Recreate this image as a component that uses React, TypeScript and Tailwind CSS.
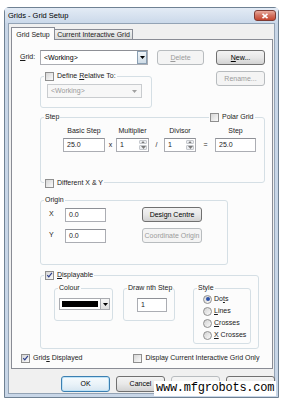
import React from "react";

function U({ children }: { children: React.ReactNode }) {
  return <span className="underline decoration-[0.5px] underline-offset-[1px]">{children}</span>;
}

function Down({ color = "#000" }: { color?: string }) {
  return (
    <svg viewBox="0 0 5 3" className="h-[3px] w-[5px]">
      <polygon points="0,0 5,0 2.5,3" fill={color} />
    </svg>
  );
}

function Up({ color = "#7a7a7a" }: { color?: string }) {
  return (
    <svg viewBox="0 0 5 3" className="h-[2px] w-[4px]">
      <polygon points="0,3 5,3 2.5,0" fill={color} />
    </svg>
  );
}

function Check({ checked = false }: { checked?: boolean }) {
  return (
    <span className="flex h-[9px] w-[9px] shrink-0 items-center justify-center border border-[#8f8f8f] bg-linear-to-br from-[#d6d6d6] to-[#fbfbfb]">
      {checked && (
        <svg viewBox="0 0 9 9" className="h-[8px] w-[8px]">
          <path d="M1.6 4.6 L3.6 6.9 L7.6 1.8" fill="none" stroke="#2c3f8c" strokeWidth="1.5" />
        </svg>
      )}
    </span>
  );
}

function Radio({ on = false }: { on?: boolean }) {
  return (
    <span className="flex h-[9px] w-[9px] shrink-0 items-center justify-center rounded-full border border-[#8f8f8f] bg-linear-to-br from-[#d2d2d2] to-[#fbfbfb]">
      {on && <span className="h-[4px] w-[4px] rounded-full bg-[#2d52a8]" />}
    </span>
  );
}

function Btn({
  children,
  disabled = false,
  primary = false,
  className = "",
}: {
  children: React.ReactNode;
  disabled?: boolean;
  primary?: boolean;
  className?: string;
}) {
  const tone = disabled
    ? "border-[#b8bcbf] bg-[#f4f4f4] text-[#9b9b9b]"
    : primary
      ? "border-[#3c7fb1] bg-linear-to-b from-[#f6fafd] via-[#eaf3f9] to-[#d7e6f1] text-black shadow-[inset_0_0_0_1px_#bfe3f7]"
      : "border-[#707070] bg-linear-to-b from-[#f3f3f3] via-[#e8e8e8] to-[#d2d2d2] text-black";
  return (
    <div className={`flex shrink-0 items-center justify-center rounded-[3px] border ${tone} ${className}`}>
      <span className="leading-[10px]">{children}</span>
    </div>
  );
}

function Field({ value, className = "" }: { value: string; className?: string }) {
  return (
    <div className={`flex h-[14px] shrink-0 items-center border border-[#abadb3] border-t-[#8e9096] bg-white pl-[3px] ${className}`}>
      <span className="leading-[10px]">{value}</span>
    </div>
  );
}

function Spin({ value, className = "" }: { value: string; className?: string }) {
  return (
    <div className={`flex h-[14px] shrink-0 border border-[#abadb3] border-t-[#8e9096] bg-white ${className}`}>
      <span className="flex-1 pl-[3px] leading-[12px]">{value}</span>
      <span className="flex w-[10px] flex-col gap-px p-px">
        <span className="flex flex-1 items-center justify-center rounded-[1px] border border-[#c6c9ce] bg-[#eceef1]">
          <Up />
        </span>
        <span className="flex flex-1 items-center justify-center rounded-[1px] border border-[#c6c9ce] bg-[#eceef1]">
          <Down color="#7a7a7a" />
        </span>
      </span>
    </div>
  );
}

function Group({
  label,
  className = "",
  children,
}: {
  label: React.ReactNode;
  className?: string;
  children?: React.ReactNode;
}) {
  return (
    <div className={`relative shrink-0 rounded-[3px] border border-[#d5dfe5] ${className}`}>
      <span className="absolute -top-[6px] left-[3px] flex items-center gap-[3px] bg-[#fcfcfc] px-[1px] leading-[10px]">
        {label}
      </span>
      {children}
    </div>
  );
}

export default function App() {
  return (
    <div className="relative h-[400px] w-[285px] overflow-hidden bg-white font-['Liberation_Sans',Arial,sans-serif] text-[7px] text-[#1b1b1b]">
      <div className="ml-[4px] mt-[7px] flex h-[391px] w-[275px] flex-col rounded-t-[5px] border border-[#6f8193] bg-[#c8d6e7]">
        {/* title bar */}
        <div className="flex h-[15px] shrink-0 items-center justify-between bg-linear-to-b from-[#e3ebf5] to-[#cbd9ea] pl-[3px] pr-[2px]">
          <span className="text-[7.5px] leading-[10px] text-black">Grids - Grid Setup</span>
          <div className="flex h-[11px] w-[22px] items-center justify-center rounded-[3px] border border-[#7d3b34] bg-linear-to-b from-[#e8a99c] via-[#d2705f] to-[#c4452f]">
            <svg viewBox="0 0 8 6" className="h-[6px] w-[8px]">
              <path d="M1.5 0.8 L6.5 5.2 M6.5 0.8 L1.5 5.2" stroke="#fff" strokeWidth="1.6" />
            </svg>
          </div>
        </div>

        {/* body */}
        <div className="mx-[3px] mb-[3px] flex flex-1 flex-col border border-[#93a3b5] bg-[#f0f0f0] pl-[2px] pr-[1px] pt-[3px]">
          {/* tabs */}
          <div className="flex h-[12px] shrink-0 items-end">
            <div className="relative z-10 -mb-px flex h-[13px] w-[44px] items-start justify-center border border-b-0 border-[#898c95] bg-[#fcfcfc] pt-[2px]">
              <span className="leading-[9px]">Grid Setup</span>
            </div>
            <div className="flex h-[10px] w-[78px] items-center justify-center border border-b-0 border-l-0 border-[#898c95] bg-linear-to-b from-[#f2f2f2] to-[#dcdcdc]">
              <span className="leading-[9px]">Current Interactive Grid</span>
            </div>
          </div>

          {/* panel */}
          <div className="flex h-[330px] shrink-0 flex-col border border-[#898c95] bg-[#fcfcfc]">
            {/* grid row */}
            <div className="mt-[10px] flex h-[15px] items-center">
              <span className="ml-[8px] w-[20px]">
                <U>G</U>rid:
              </span>
              <div className="flex h-[15px] w-[108px] items-center border border-[#abadb3] border-t-[#8e9096] bg-white pl-[3px]">
                <span className="flex-1 leading-[10px] text-black">&lt;Working&gt;</span>
                <span className="flex h-full w-[10px] items-center justify-center border border-[#8a9fb3] bg-linear-to-b from-[#f1f5f8] to-[#cfdce7]">
                  <Down />
                </span>
              </div>
              <Btn disabled className="ml-[9px] h-[15px] w-[47px]">
                <U>D</U>elete
              </Btn>
              <Btn className="ml-[12px] h-[15px] w-[49px]">
                <U>N</U>ew...
              </Btn>
            </div>

            {/* define relative row */}
            <div className="mt-[6px] flex items-start">
              <Group
                className="ml-[28px] mt-[5px] h-[32px] w-[112px]"
                label={
                  <>
                    <Check />
                    <span>
                      Define <U>R</U>elative To:
                    </span>
                  </>
                }
              >
                <div className="ml-[6px] mt-[7px] flex h-[14px] w-[95px] items-center border border-[#c9cccf] bg-[#f7f7f7] pl-[3px] pr-[4px]">
                  <span className="flex-1 leading-[10px] text-[#9a9a9a]">&lt;Working&gt;</span>
                  <Down color="#a0a0a0" />
                </div>
              </Group>
              <Btn disabled className="ml-[64px] h-[15px] w-[49px]">
                Rename...
              </Btn>
            </div>

            {/* step */}
            <Group className="ml-[28px] mt-[9px] h-[66px] w-[225px]" label={<span>Step</span>}>
              <span className="absolute -top-[6px] left-[168px] flex items-center gap-[3px] bg-[#fcfcfc] px-[1px] leading-[10px]">
                <Check />
                <span>Polar Grid</span>
              </span>
              <div className="ml-[22px] mt-[8px] grid grid-cols-[42px_11px_33px_15px_32px_19px_41px] items-center">
                <span className="text-center leading-[9px]">Basic Step</span>
                <span />
                <span className="text-center leading-[9px]">Multiplier</span>
                <span />
                <span className="text-center leading-[9px]">Divisor</span>
                <span />
                <span className="text-center leading-[9px]">Step</span>
              </div>
              <div className="ml-[22px] mt-[3px] grid grid-cols-[42px_11px_33px_15px_32px_19px_41px] items-center">
                <Field value="25.0" />
                <span className="text-center">x</span>
                <Spin value="1" />
                <span className="text-center">/</span>
                <Spin value="1" />
                <span className="text-center">=</span>
                <Field value="25.0" />
              </div>
              <span className="absolute -bottom-[6px] left-[3px] flex items-center gap-[3px] bg-[#fcfcfc] px-[1px] leading-[10px]">
                <Check />
                <span>Different X &amp; Y</span>
              </span>
            </Group>

            {/* origin */}
            <Group className="ml-[28px] mt-[17px] h-[65px] w-[188px]" label={<span>Origin</span>}>
              <div className="mt-[6px] flex items-center">
                <span className="ml-[8px] w-[16px]">X</span>
                <Field value="0.0" className="w-[41px]" />
                <Btn className="ml-[36px] h-[15px] w-[60px]">Design Centre</Btn>
              </div>
              <div className="mt-[6px] flex items-center">
                <span className="ml-[8px] w-[16px]">Y</span>
                <Field value="0.0" className="w-[41px]" />
                <Btn disabled className="ml-[36px] h-[15px] w-[60px]">
                  Coordinate Origin
                </Btn>
              </div>
            </Group>

            {/* displayable */}
            <Group
              className="ml-[28px] mt-[10px] h-[74px] w-[219px]"
              label={
                <>
                  <Check checked />
                  <span>
                    <U>D</U>isplayable
                  </span>
                </>
              }
            >
              <div className="ml-[13px] mt-[12px] flex items-start">
                <Group className="h-[33px] w-[59px]" label={<span>Colour</span>}>
                  <div className="ml-[4px] mt-[9px] flex h-[12px] w-[51px] border border-[#a9abb0] bg-white">
                    <span className="m-[2px] flex-1 bg-black" />
                    <span className="flex w-[9px] items-center justify-center border-l border-[#a9abb0] bg-linear-to-b from-[#f6f6f6] to-[#dedede]">
                      <Down />
                    </span>
                  </div>
                </Group>
                <Group className="ml-[10px] h-[33px] w-[52px]" label={<span>Draw nth Step</span>}>
                  <Field value="1" className="ml-[13px] mt-[9px] w-[30px]" />
                </Group>
                <Group className="ml-[18px] h-[56px] w-[58px]" label={<span>Style</span>}>
                  <div className="ml-[9px] mt-[4px] flex flex-col">
                    <div className="flex h-[12px] items-center gap-[2px]">
                      <Radio on />
                      <span>
                        Do<U>t</U>s
                      </span>
                    </div>
                    <div className="flex h-[12px] items-center gap-[2px]">
                      <Radio />
                      <span>
                        <U>L</U>ines
                      </span>
                    </div>
                    <div className="flex h-[12px] items-center gap-[2px]">
                      <Radio />
                      <span>
                        <U>C</U>rosses
                      </span>
                    </div>
                    <div className="flex h-[12px] items-center gap-[2px]">
                      <Radio />
                      <span>
                        <U>X</U> Crosses
                      </span>
                    </div>
                  </div>
                </Group>
              </div>
            </Group>

            {/* bottom checks */}
            <div className="mt-[4px] flex h-[10px] items-center">
              <span className="ml-[9px] flex items-center gap-[3px]">
                <Check checked />
                <span>
                  Grid<U>s</U> Displayed
                </span>
              </span>
              <span className="ml-[51px] flex items-center gap-[3px]">
                <Check />
                <span>Display Current Interactive Grid Only</span>
              </span>
            </div>
          </div>

          {/* buttons */}
          <div className="mt-[7px] flex h-[16px] gap-[6px] pl-[50px]">
            <Btn primary className="h-[16px] w-[49px]">
              OK
            </Btn>
            <Btn className="h-[16px] w-[49px]">Cancel</Btn>
            <Btn disabled className="h-[16px] w-[49px]">
              Apply
            </Btn>
            <Btn className="h-[16px] w-[49px]">Help</Btn>
          </div>
        </div>
      </div>

      {/* watermark */}
      <span className="absolute left-[154px] top-[381px] bg-white px-[2px] font-['Liberation_Mono','Courier_New',monospace] text-[12px] leading-[15px] tracking-[-0.25px] text-black">
        www.mfgrobots.com
      </span>
    </div>
  );
}
